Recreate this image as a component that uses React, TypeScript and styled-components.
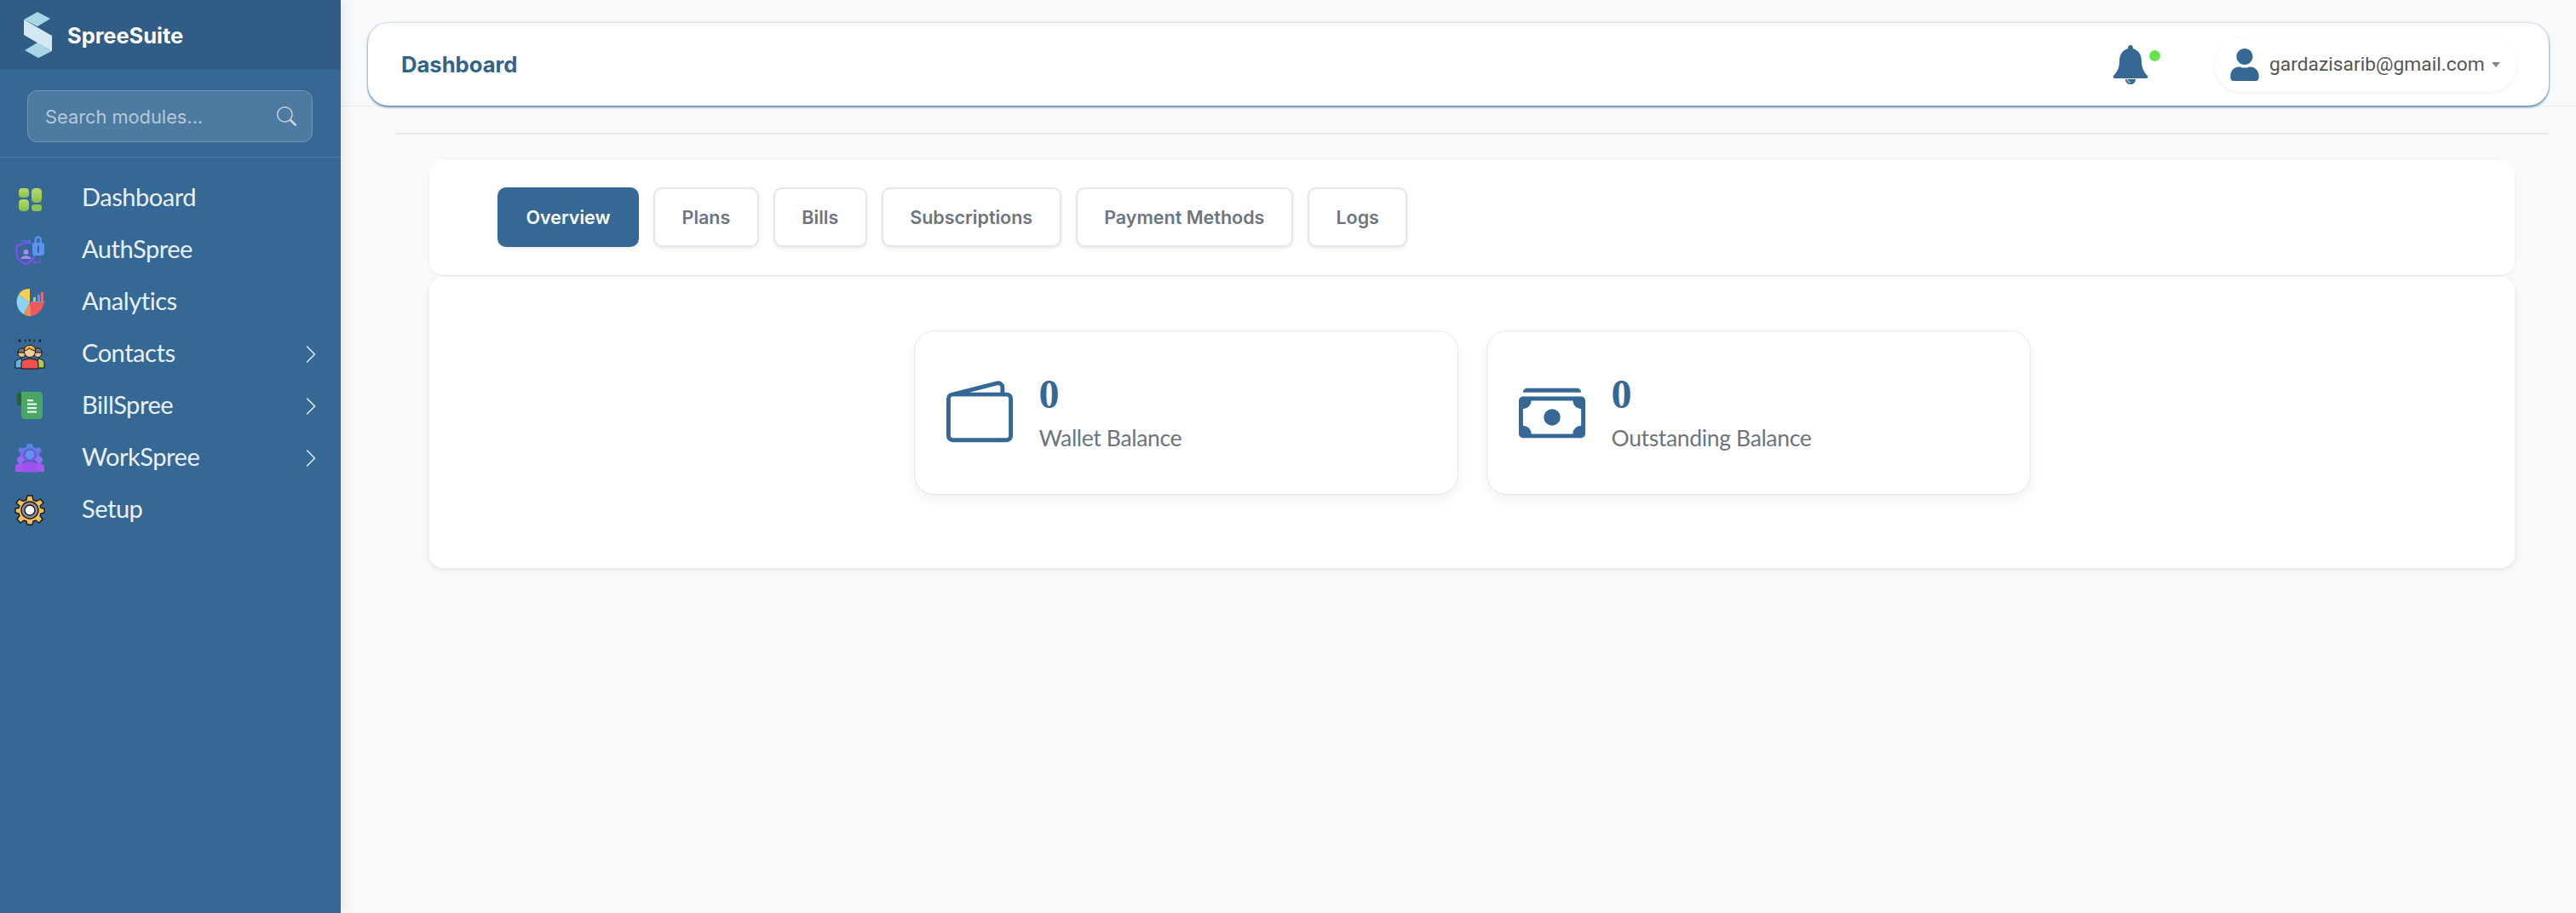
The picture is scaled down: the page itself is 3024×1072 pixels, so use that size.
import React from "react";
import styled, { createGlobalStyle } from "styled-components";
import { BsCashStack, BsChevronRight, BsSearch, BsWallet2 } from "react-icons/bs";
import { FaUser } from "react-icons/fa";

const BLUE = "#356895";

const GlobalStyle = createGlobalStyle`
    html, body {
        margin: 0;
        height: 100%;
        overflow: hidden;
        background: #f9f9f9;
        font-family: "Inter", "Liberation Sans", sans-serif;
    }
    * { box-sizing: border-box; }
`;

const DashboardIcon = () => (
    <svg width="36" height="36" viewBox="0 0 36 36">
        <defs>
            <linearGradient id="dashGreen" x1="0" y1="0" x2="0" y2="1">
                <stop offset="0" stopColor="#bcd96a" />
                <stop offset="1" stopColor="#86bf4b" />
            </linearGradient>
        </defs>
        <rect x="5" y="6" width="12" height="11" rx="4" fill="url(#dashGreen)" />
        <rect x="5" y="19" width="12" height="14" rx="4.5" fill="url(#dashGreen)" />
        <rect x="20" y="6" width="12" height="17" rx="4.5" fill="url(#dashGreen)" />
        <rect x="20" y="25" width="12" height="8" rx="3.5" fill="#8cc34e" />
    </svg>
);

const AuthIcon = () => (
    <svg width="36" height="36" viewBox="0 0 36 36">
        <path d="M2.5 13 L15 8.5 L24 12 V21 C24 28 18 32 13.5 34.5 C8 32 2.5 28 2.5 21 Z" fill="none" stroke="#7b52e8" strokeWidth="2.4" />
        <circle cx="13.5" cy="20" r="3" fill="#a88bf0" />
        <path d="M7.5 28 C8.5 23 18.5 23 19.5 28 Z" fill="#a88bf0" />
        <path d="M7 7 H19 M17 5 L19 7 L17 9" fill="none" stroke="#4b85e8" strokeWidth="1" />
        <path d="M23.5 9 V5 C23.5 0 32 0 32 5 V9 H29.8 V5.5 C29.8 3 25.8 3 25.8 5.5 V9 Z" fill="#5a93f0" />
        <rect x="21" y="9" width="14" height="15" rx="3" fill="#5a93f0" />
        <rect x="27" y="12.5" width="2" height="8" fill="#2f5ea8" />
        <path d="M30 26 V32 H22 M24 30 L22 32 L24 34" fill="none" stroke="#7b52e8" strokeWidth="1.1" />
    </svg>
);

const AnalyticsIcon = () => (
    <svg width="36" height="36" viewBox="0 0 36 36">
        <path d="M18 18 L18 2 C11 2 7 5 5 9 Z" fill="#f7d154" />
        <path d="M18 18 L5 9 C0 17 3 28 11 32 Z" fill="#8ed3f3" />
        <path d="M18 18 L11 32 C14 34 17 34.5 20 34 Z" fill="#f6894f" />
        <path d="M18 18 L20 34 C28 33 33 26 35 18 Z" fill="#ee5a5a" />
        <rect x="22" y="12" width="3" height="5" fill="#f0b24a" />
        <rect x="27" y="9" width="3" height="8" fill="#5a93f0" />
        <rect x="31" y="6" width="3" height="11" fill="#e86a6a" />
        <rect x="20" y="17" width="15.5" height="1" fill="#8f8fd0" />
    </svg>
);

const ContactsIcon = () => (
    <svg width="36" height="36" viewBox="0 0 36 36">
        <g fill="#111">
            <path d="M6 0 L7.5 2 L6 4 L4.5 2 Z" />
            <path d="M30 0 L31.5 2 L30 4 L28.5 2 Z" />
            <rect x="17.2" y="0" width="1.4" height="3" />
            <rect x="12.5" y="1" width="1.2" height="2.4" />
            <rect x="22.5" y="1" width="1.2" height="2.4" />
        </g>
        <path d="M1 34 V28 C1 25 4 24 8 23 L11 34 Z" fill="#5bb8e0" stroke="#111" strokeWidth="1" />
        <path d="M35 34 V28 C35 25 32 24 28 23 L25 34 Z" fill="#a6d05a" stroke="#111" strokeWidth="1" />
        <circle cx="8.5" cy="17" r="4.5" fill="#e8c49a" stroke="#111" strokeWidth="1" />
        <circle cx="27.5" cy="17" r="4.5" fill="#e8c49a" stroke="#111" strokeWidth="1" />
        <path d="M4 16 C4 9 13 9 13 16 Z" fill="#777" stroke="#111" strokeWidth="1" />
        <path d="M23 16 C23 9 32 9 32 16 Z" fill="#777" stroke="#111" strokeWidth="1" />
        <path d="M8 35 V28 C8 25 12 24 18 23 C24 24 28 25 28 28 V35 Z" fill="#ee4f4f" stroke="#111" strokeWidth="1" />
        <circle cx="18" cy="15" r="6.5" fill="#f7cf9b" stroke="#111" strokeWidth="1" />
        <path d="M11.5 14 C10.5 5 25.5 5 24.5 14 C21 13 18 12 17 10.5 C16 13 14 13 11.5 14 Z" fill="#f3b33d" stroke="#111" strokeWidth="1" />
    </svg>
);

const BillIcon = () => (
    <svg width="36" height="36" viewBox="0 0 36 36">
        <path d="M3 5 C3 2 6 1 9 1 H14 V17 H6 C4 17 3 16 3 14 Z" fill="#255e3e" />
        <path d="M9 1 H28 C31 1 33 3 33 6 V29 C33 31 31 33 29 33 H12 C10 33 8 31 8 29 V6 C8 3 7 1 9 1 Z" fill="#49a764" />
        <g fill="#e9f6ec">
            <rect x="15" y="10" width="7" height="2.2" />
            <rect x="15" y="14.5" width="11" height="2.2" />
            <rect x="15" y="19" width="11" height="2.2" />
            <rect x="15" y="23.5" width="11" height="2.2" />
        </g>
    </svg>
);

const WorkIcon = () => (
    <svg width="36" height="36" viewBox="0 0 36 36">
        <defs>
            <linearGradient id="workGrad" x1="0" y1="0" x2="0" y2="1">
                <stop offset="0" stopColor="#4a90e8" />
                <stop offset="1" stopColor="#a14fee" />
            </linearGradient>
        </defs>
        <path d="M15 1 H21 L22 5 L26 6.5 L29.5 5 L32 9 L29.5 12 V21 H6.5 V12 L4 9 L6.5 5 L10 6.5 L14 5 Z" fill="url(#workGrad)" />
        <circle cx="7" cy="20" r="4" fill="#8e6ff0" />
        <circle cx="29" cy="20" r="4" fill="#8e6ff0" />
        <path d="M1 34 V28 C1 25 4 24 8 24 H28 C32 24 35 25 35 28 V34 Z" fill="#a557ee" />
        <circle cx="18" cy="14" r="6.5" fill="#6a8ef0" stroke="#4f66c8" strokeWidth="2" />
        <path d="M10 34 V27 C10 23 14 22 18 22 C22 22 26 23 26 27 V34 Z" fill="#a14fee" stroke="#8c5ae8" strokeWidth="1" />
    </svg>
);

const SetupIcon = () => (
    <svg width="36" height="36" viewBox="0 0 36 36">
        <path
            d="M15 1 H21 L22 6 L26 7.5 L30.5 5 L34 9.5 L30 13 L31 15.5 L35 16 V21 L31 22 L30 24.5 L33 28.5 L29 33 L25 30 L22 31 L21 35 H15 L14 31 L11 30 L7 33 L3 28.5 L6 24.5 L5 22 L1 21 V16 L5 15.5 L6 13 L2 9.5 L5.5 5 L10 7.5 L14 6 Z"
            fill="#f6bf5c"
            stroke="#1a1a1a"
            strokeWidth="1.4"
            strokeLinejoin="round"
        />
        <circle cx="18" cy="18" r="10" fill="#8d8d99" stroke="#1a1a1a" strokeWidth="1.4" />
        <circle cx="18" cy="18" r="6" fill="#fff" stroke="#1a1a1a" strokeWidth="1.4" />
    </svg>
);

const BellIcon = () => (
    <svg width="42" height="46" viewBox="0 0 42 46">
        <path
            d="M21 0 C23 0 24 1.5 24 4 C31 6 34 12 34 19 C34 27 37 32 41 36 C42 37.5 41 39 39.5 39 H2.5 C1 39 0 37.5 1 36 C5 32 8 27 8 19 C8 12 11 6 18 4 C18 1.5 19 0 21 0 Z"
            fill={BLUE}
        />
        <path d="M15 40 H27 C27 44 24 46 21 46 C18 46 15 44 15 40 Z" fill={BLUE} />
        <path d="M17 39.5 C17 42 19 43.5 21 43.5" fill="none" stroke="#fff" strokeWidth="1" />
    </svg>
);

const navItems = [
    { label: "Dashboard", icon: <DashboardIcon /> },
    { label: "AuthSpree", icon: <AuthIcon /> },
    { label: "Analytics", icon: <AnalyticsIcon /> },
    { label: "Contacts", icon: <ContactsIcon />, more: true },
    { label: "BillSpree", icon: <BillIcon />, more: true },
    { label: "WorkSpree", icon: <WorkIcon />, more: true },
    { label: "Setup", icon: <SetupIcon /> },
];

const tabs = ["Overview", "Plans", "Bills", "Subscriptions", "Payment Methods", "Logs"];

export default function App() {
    return (
        <Page>
            <GlobalStyle />
            <Sidebar>
                <Brand>
                    <svg width="36" height="56" viewBox="0 0 36 56">
                        <path d="M1 10 L17 1 L32 9 L17 18 Z" fill="#a9d6e5" />
                        <path d="M2 46 L17 37 L34 47 L18 55 Z" fill="#a9d6e5" />
                        <path d="M1 10 L34 29 V47 L1 28 Z" fill="#d3e9f1" />
                    </svg>
                    <BrandName>SpreeSuite</BrandName>
                </Brand>
                <SearchArea>
                    <SearchBox>
                        <SearchInput placeholder="Search modules..." />
                        <BsSearch size={23} color="rgba(255,255,255,0.65)" />
                    </SearchBox>
                </SearchArea>
                <Nav>
                    {navItems.map((item) => (
                        <NavRow key={item.label}>
                            <NavIcon>{item.icon}</NavIcon>
                            <NavLabel>{item.label}</NavLabel>
                            {item.more && <BsChevronRight size={24} color="#e4eef6" />}
                        </NavRow>
                    ))}
                </Nav>
            </Sidebar>
            <Main>
                <TopBand>
                    <TopBar>
                        <PageTitle>Dashboard</PageTitle>
                        <BellWrap>
                            <BellIcon />
                            <GreenDot />
                        </BellWrap>
                        <UserPill>
                            <FaUser size={38} color={BLUE} />
                            <UserEmail>gardazisarib@gmail.com</UserEmail>
                            <Caret />
                        </UserPill>
                    </TopBar>
                </TopBand>
                <Divider />
                <Content>
                    <TabsCard>
                        {tabs.map((tab, i) => (
                            <Tab key={tab} $active={i === 0}>{tab}</Tab>
                        ))}
                    </TabsCard>
                    <StatsCard>
                        <StatBox>
                            <BsWallet2 size={78} color={BLUE} />
                            <StatText>
                                <StatValue>0</StatValue>
                                <StatLabel>Wallet Balance</StatLabel>
                            </StatText>
                        </StatBox>
                        <StatBox>
                            <BsCashStack size={78} color={BLUE} />
                            <StatText>
                                <StatValue>0</StatValue>
                                <StatLabel>Outstanding Balance</StatLabel>
                            </StatText>
                        </StatBox>
                    </StatsCard>
                </Content>
            </Main>
        </Page>
    );
}

const Page = styled.div`
    display: flex;
    width: 3024px;
    height: 1072px;
    overflow: hidden;
`;
const Sidebar = styled.aside`
    width: 400px;
    flex-shrink: 0;
    background: ${BLUE};
    box-shadow: 4px 0 12px rgba(0, 0, 0, 0.08);
    z-index: 2;
`;
const Brand = styled.div`
    height: 82px;
    display: flex;
    align-items: center;
    gap: 16px;
    padding-left: 27px;
    background: #305c85;
`;
const BrandName = styled.span`
    font-size: 25.4px;
    font-weight: 700;
    color: #fff;
`;
const SearchArea = styled.div`
    padding: 24px 33px 17px 32px;
    border-bottom: 1px solid rgba(255, 255, 255, 0.13);
`;
const SearchBox = styled.div`
    height: 61px;
    display: flex;
    align-items: center;
    padding: 0 18px 0 18px;
    background: rgba(255, 255, 255, 0.12);
    border: 1px solid rgba(255, 255, 255, 0.2);
    border-radius: 12px;
`;
const SearchInput = styled.input`
    flex: 1;
    min-width: 0;
    border: 0;
    outline: 0;
    background: transparent;
    font-family: "Inter", "Liberation Sans", sans-serif;
    font-size: 21.8px;
    color: #fff;
    &::placeholder {
        color: rgba(255, 255, 255, 0.6);
        opacity: 1;
    }
`;
const Nav = styled.nav`
    padding-top: 17px;
`;
const NavRow = styled.div`
    height: 61px;
    display: flex;
    align-items: center;
    padding: 0 23px 0 17px;
`;
const NavIcon = styled.span`
    width: 36px;
    height: 36px;
    display: flex;
    margin-right: 43px;
`;
const NavLabel = styled.span`
    flex: 1;
    padding-bottom: 4px;
    font-family: "Lato", "Liberation Sans", sans-serif;
    font-size: 29px;
    letter-spacing: -0.45px;
    color: #e9f1f8;
`;
const Main = styled.main`
    flex: 1;
    min-width: 0;
`;
const TopBand = styled.header`
    height: 125px;
    padding: 27px 32px 0;
    background: #f8f9fa;
    border-bottom: 1px solid #e9ecef;
`;
const TopBar = styled.div`
    height: 97px;
    display: flex;
    align-items: center;
    padding: 0 38px 0 39px;
    background: #fff;
    border-radius: 24px;
    box-shadow: 0 2px 3px rgba(53, 104, 149, 0.75), 0 0 3px rgba(53, 104, 149, 0.4);
`;
const PageTitle = styled.h1`
    flex: 1;
    margin: 0;
    font-size: 25.6px;
    font-weight: 700;
    color: #2f6488;
`;
const BellWrap = styled.div`
    position: relative;
    display: flex;
    margin-right: 78px;
`;
const GreenDot = styled.span`
    position: absolute;
    top: 6px;
    right: -14px;
    width: 13px;
    height: 13px;
    border-radius: 50%;
    background: #66e34f;
`;
const UserPill = styled.div`
    width: 354px;
    height: 64px;
    display: flex;
    align-items: center;
    padding-left: 16px;
    background: #fff;
    border-radius: 32px;
    box-shadow: 0 1px 4px rgba(0, 0, 0, 0.08);
`;
const UserEmail = styled.span`
    margin-left: 10px;
    font-family: "Roboto", "Liberation Sans", sans-serif;
    font-size: 22.8px;
    color: #555;
`;
const Caret = styled.span`
    width: 0;
    height: 0;
    margin-left: 8px;
    border-left: 5px solid transparent;
    border-right: 5px solid transparent;
    border-top: 6px solid #888;
`;
const Divider = styled.div`
    height: 2px;
    margin: 31px 32px 0 64px;
    background: #ececee;
`;
const Content = styled.div`
    margin: 30px 72px 0 104px;
`;
const TabsCard = styled.div`
    height: 135px;
    display: flex;
    align-items: center;
    gap: 17px;
    padding: 0 0 2px 80px;
    background: #fff;
    border-radius: 16px;
    box-shadow: 0 1px 2px rgba(0, 0, 0, 0.08);
`;
const Tab = styled.button<{ $active?: boolean }>`
    height: 70px;
    padding: 0 31.5px;
    font-family: "Inter", "Liberation Sans", sans-serif;
    font-size: 21.5px;
    font-weight: 600;
    color: ${(p) => (p.$active ? "#fff" : "#6c757d")};
    background: ${(p) => (p.$active ? BLUE : "#fff")};
    border: 2px solid ${(p) => (p.$active ? BLUE : "#e3e6ec")};
    border-radius: 10px;
    box-shadow: 0 2px 4px rgba(0, 0, 0, 0.08);
`;
const StatsCard = styled.div`
    height: 342px;
    margin-top: 2px;
    display: flex;
    justify-content: center;
    gap: 33px;
    padding-top: 63px;
    background: #fff;
    border-radius: 16px;
    box-shadow: 0 2px 6px rgba(0, 0, 0, 0.1);
`;
const StatBox = styled.div`
    width: 639px;
    height: 193px;
    display: flex;
    align-items: center;
    gap: 31px;
    padding-left: 37px;
    background: #fff;
    border: 1px solid #e6e8ee;
    border-radius: 24px;
    box-shadow: 0 6px 14px rgba(0, 0, 0, 0.06);
`;
const StatText = styled.div`
    display: flex;
    flex-direction: column;
    gap: 7px;
    margin-top: -4px;
`;
const StatValue = styled.span`
    font-family: "Liberation Serif", serif;
    font-size: 48px;
    font-weight: 700;
    line-height: 56px;
    color: ${BLUE};
`;
const StatLabel = styled.span`
    font-family: "Lato", "Liberation Sans", sans-serif;
    font-size: 26.5px;
    letter-spacing: -0.35px;
    color: #6c757d;
`;
